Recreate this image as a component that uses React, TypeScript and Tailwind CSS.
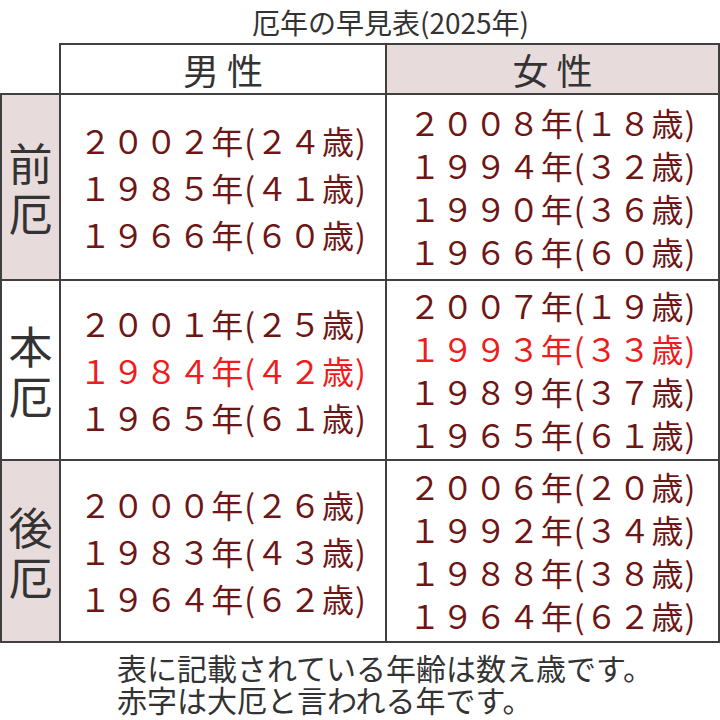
const fw = (s: string) => s.replace(/[0-9]/g, (d) => String.fromCharCode(d.charCodeAt(0) + 0xfee0));

type Entry = { year: string; age: string; red?: boolean };

const rows: { label: [string, string]; pink: boolean; male: Entry[]; female: Entry[] }[] = [
  {
    label: ["前", "厄"],
    pink: true,
    male: [
      { year: "2002", age: "24" },
      { year: "1985", age: "41" },
      { year: "1966", age: "60" },
    ],
    female: [
      { year: "2008", age: "18" },
      { year: "1994", age: "32" },
      { year: "1990", age: "36" },
      { year: "1966", age: "60" },
    ],
  },
  {
    label: ["本", "厄"],
    pink: false,
    male: [
      { year: "2001", age: "25" },
      { year: "1984", age: "42", red: true },
      { year: "1965", age: "61" },
    ],
    female: [
      { year: "2007", age: "19" },
      { year: "1993", age: "33", red: true },
      { year: "1989", age: "37" },
      { year: "1965", age: "61" },
    ],
  },
  {
    label: ["後", "厄"],
    pink: true,
    male: [
      { year: "2000", age: "26" },
      { year: "1983", age: "43" },
      { year: "1964", age: "62" },
    ],
    female: [
      { year: "2006", age: "20" },
      { year: "1992", age: "34" },
      { year: "1988", age: "38" },
      { year: "1964", age: "62" },
    ],
  },
];

const Line = ({ e }: { e: Entry }) => (
  <div className={e.red ? "text-[#ee1c1c]" : "text-[#6e1616]"}>
    {fw(e.year)}年({fw(e.age)}歳)
  </div>
);

export default function App() {
  return (
    <div className="w-[720px] h-[720px] bg-white overflow-hidden font-['Noto_Sans_CJK_JP',sans-serif] text-[#333]">
      {/* title */}
      <div className="h-[43px] pl-[61px] flex items-center justify-center text-[28px] leading-none">
        厄年の早見表(2025年)
      </div>

      <div className="grid grid-cols-[61px_326px_333px] grid-rows-[52px_186px_180px_182px]">
        <div className="border-r-2 border-b-2 border-[#404040]" />
        <div className="border-t-2 border-r-2 border-b-2 border-[#404040] flex items-center justify-center text-[36px] leading-none">
          男 性
        </div>
        <div className="border-t-2 border-r-2 border-b-2 border-[#404040] bg-[#e8dbdb] flex items-center justify-center text-[36px] leading-none">
          女 性
        </div>

        {rows.map((r) => (
          <div key={r.label[0]} className="contents">
            <div
              className={`border-l-2 border-r-2 border-b-2 border-[#404040] flex flex-col items-center justify-center text-[44px] leading-[50px] ${
                r.pink ? "bg-[#e8dbdb]" : "bg-white"
              }`}
            >
              <span>{r.label[0]}</span>
              <span>{r.label[1]}</span>
            </div>
            <div className="border-r-2 border-b-2 border-[#404040] flex flex-col items-center justify-center text-[32px] leading-[47px] tracking-[1px]">
              {r.male.map((e) => (
                <Line key={e.year} e={e} />
              ))}
            </div>
            <div className="border-r-2 border-b-2 border-[#404040] flex flex-col items-center justify-center text-[32px] leading-[43px] tracking-[1px]">
              {r.female.map((e) => (
                <Line key={e.year} e={e} />
              ))}
            </div>
          </div>
        ))}
      </div>

      {/* notes */}
      <div className="pl-[117px] pt-[8px] text-[30px] leading-[32px] text-[#333]">
        <div>表に記載されている年齢は数え歳です。</div>
        <div>赤字は大厄と言われる年です。</div>
      </div>
    </div>
  );
}
